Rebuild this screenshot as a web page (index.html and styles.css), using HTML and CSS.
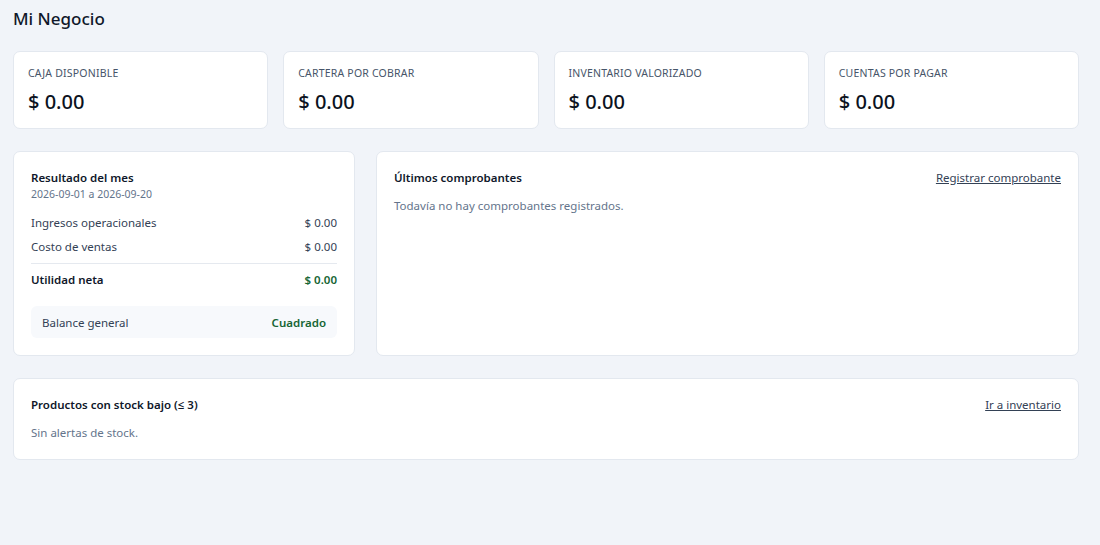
FILE: index.html
```html
<!DOCTYPE html>
<html lang="es">
<head>
<meta charset="utf-8">
<title>Mi Negocio</title>
<link rel="stylesheet" href="styles.css">
</head>
<body>
<main class="page">
  <h1 class="title">Mi Negocio</h1>
  <section class="stats">
    <div class="card stat"><div class="stat-label">Caja disponible</div><div class="stat-value">$ 0.00</div></div>
    <div class="card stat"><div class="stat-label">Cartera por cobrar</div><div class="stat-value">$ 0.00</div></div>
    <div class="card stat"><div class="stat-label">Inventario valorizado</div><div class="stat-value">$ 0.00</div></div>
    <div class="card stat"><div class="stat-label">Cuentas por pagar</div><div class="stat-value">$ 0.00</div></div>
  </section>
  <section class="middle">
    <div class="card panel result">
      <div class="panel-title">Resultado del mes</div>
      <div class="panel-sub">2026-09-01 a 2026-09-20</div>
      <div class="rows">
        <div class="row"><span>Ingresos operacionales</span><span>$ 0.00</span></div>
        <div class="row"><span>Costo de ventas</span><span>$ 0.00</span></div>
        <div class="row total"><span>Utilidad neta</span><span class="green">$ 0.00</span></div>
      </div>
      <div class="balance"><span>Balance general</span><span class="green strong">Cuadrado</span></div>
    </div>
    <div class="card panel">
      <div class="panel-head"><span class="panel-title">Últimos comprobantes</span><a class="link" href="#">Registrar comprobante</a></div>
      <p class="empty">Todavía no hay comprobantes registrados.</p>
    </div>
  </section>
  <section class="card panel stock">
    <div class="panel-head"><span class="panel-title">Productos con stock bajo (≤ 3)</span><a class="link" href="#">Ir a inventario</a></div>
    <p class="empty">Sin alertas de stock.</p>
  </section>
</main>
</body>
</html>
```
FILE: styles.css
```css
* { box-sizing: border-box; }
html, body { margin: 0; }
body {
  background: #f1f4f9;
  font-family: "Noto Sans", "Open Sans", sans-serif;
  color: #0f172a;
  width: 1100px;
  height: 545px;
  overflow: hidden;
}
.page {
  padding: 6px 21px 0 13px;
  display: flex;
  flex-direction: column;
}
.title {
  margin: 0;
  font-size: 17px;
  font-weight: 500;
  line-height: 26px;
  height: 45px;
}
.card {
  background: #fff;
  border: 1px solid #e3e8ef;
  border-radius: 7px;
}
.stats {
  display: grid;
  grid-template-columns: repeat(4, 1fr);
  gap: 15px;
}
.stat {
  height: 78px;
  padding: 13px 14px 0 14px;
}
.stat-label {
  font-size: 10.5px;
  text-transform: uppercase;
  letter-spacing: 0.2px;
  color: #475569;
  line-height: 16px;
}
.stat-value {
  font-size: 20px;
  font-weight: 500;
  line-height: 28px;
  margin-top: 7px;
  color: #0b1220;
}
.middle {
  display: grid;
  grid-template-columns: 342px 1fr;
  gap: 21px;
  margin-top: 22px;
}
.panel {
  padding: 17px 17px 0 17px;
}
.result { height: 205px; }
.middle .panel:last-child { height: 205px; }
.panel-title {
  font-size: 11.5px;
  font-weight: 600;
  line-height: 18px;
  color: #0f172a;
}
.panel-sub {
  font-size: 10.5px;
  color: #64748b;
  line-height: 14px;
}
.rows { margin-top: 10px; }
.row {
  display: flex;
  justify-content: space-between;
  font-size: 11.5px;
  line-height: 18px;
  color: #334155;
  padding: 3px 0;
}
.row.total {
  border-top: 1px solid #e5e9ef;
  margin-top: 4px;
  padding-top: 7px;
  font-weight: 600;
  color: #0f172a;
}
.green { color: #166534; }
.strong { font-weight: 600; }
.balance {
  margin-top: 14px;
  background: #f7f9fc;
  border-radius: 6px;
  height: 32px;
  padding: 0 11px;
  display: flex;
  align-items: center;
  justify-content: space-between;
  font-size: 11.5px;
  color: #334155;
}
.panel-head {
  display: flex;
  justify-content: space-between;
  align-items: center;
}
.link {
  font-size: 11.5px;
  color: #334155;
  text-decoration: underline;
  line-height: 18px;
}
.empty {
  margin: 10px 0 0;
  font-size: 11.5px;
  line-height: 18px;
  color: #64748b;
}
.stock {
  margin-top: 22px;
  height: 82px;
}
```
